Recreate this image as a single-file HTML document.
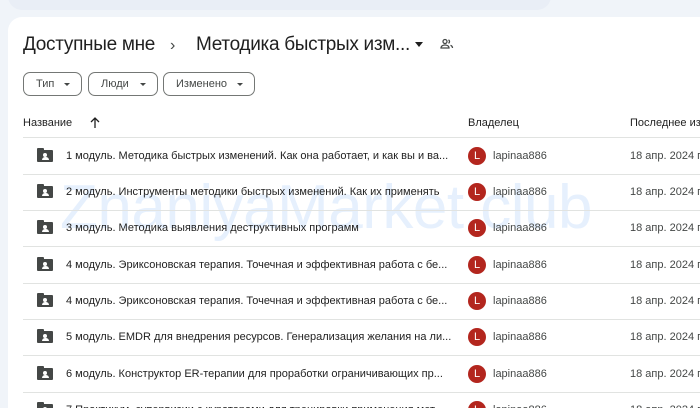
<!DOCTYPE html>
<html><head><meta charset="utf-8"><style>
*{margin:0;padding:0;box-sizing:border-box}
html,body{width:700px;height:408px;overflow:hidden}
body{background:#f0f4f9;font-family:"Liberation Sans",sans-serif;color:#1f1f1f;position:relative}
.search{position:absolute;left:8px;top:-20px;width:543px;height:30px;background:#e9eef6;border-radius:14px}
.card{position:absolute;left:8px;top:17px;width:692px;height:391px;background:#fff;border-radius:14px 0 0 0}
.bc{position:absolute;top:34px;font-size:19px;color:#1f1f1f;letter-spacing:-0.3px;white-space:nowrap}
.chip{position:absolute;top:72px;height:24px;border:1px solid #747775;border-radius:7px;font-size:11px;line-height:22px;padding-left:12px;color:#444746}
.chip:after{content:"";position:absolute;right:11px;top:10px;border-left:3px solid transparent;border-right:3px solid transparent;border-top:3px solid #444746}
.hdr{position:absolute;top:117px;font-size:11px;color:#1f1f1f;white-space:nowrap}
.line{position:absolute;left:23px;width:677px;height:1px;background:#e1e3e1}
.row{position:absolute;left:0;width:700px;height:20px;font-size:11px;overflow:hidden}
.row .ic{position:absolute;left:37px;top:4px;width:16px;height:12px;background:#444746;border-radius:1px}
.row .ic:before{content:"";position:absolute;left:0;top:-2px;width:7px;height:3px;background:#444746;border-radius:1px 1px 0 0}
.row .ic i{position:absolute;left:6px;top:3px;width:4px;height:4px;border-radius:50%;background:#fff}
.row .ic b{position:absolute;left:4.5px;top:7px;width:7px;height:3px;border-radius:3px 3px 0 0;background:#fff}
.row .t{position:absolute;left:66px;top:4px;white-space:nowrap}
.row .av{position:absolute;left:468px;top:1px;width:18px;height:18px;border-radius:50%;background:#b3261e;color:#fff;font-size:11px;text-align:center;line-height:18px}
.row .o{position:absolute;left:493px;top:4px;color:#444746}
.row .d{position:absolute;left:630px;top:4px;width:70px;overflow:hidden;color:#444746;white-space:nowrap}
.wm{position:absolute;left:60px;top:172px;font-size:62px;color:#e6f0fd;letter-spacing:-0.5px;white-space:nowrap}
</style></head><body>
<div class="search"></div>
<div class="card"></div>
<div class="bc" style="left:23px">Доступные мне</div>
<div class="bc" style="left:170px;font-size:16px;top:37px;color:#444746">›</div>
<div class="bc" style="left:196px">Методика быстрых изм...</div>
<div style="position:absolute;left:415px;top:42px;border-left:4px solid transparent;border-right:4px solid transparent;border-top:5px solid #1f1f1f"></div>
<svg style="position:absolute;left:440px;top:38px" width="14" height="12" viewBox="0 0 14 12" fill="none" stroke="#444746" stroke-width="1.3"><circle cx="5" cy="3.5" r="2"/><path d="M1 10c0-2 2-3 4-3s4 1 4 3z"/><path d="M8.5 1.8a2 2 0 010 3.5M10.5 7.3c1.3.5 2 1.4 2 2.7"/></svg>
<div class="chip" style="left:23px;width:59px">Тип</div>
<div class="chip" style="left:88px;width:70px">Люди</div>
<div class="chip" style="left:163px;width:92px">Изменено</div>
<div class="hdr" style="left:23px">Название</div>
<svg style="position:absolute;left:90px;top:117px" width="10" height="11" viewBox="0 0 10 11" fill="none" stroke="#1f1f1f" stroke-width="1.3"><path d="M5 11V1M1 5l4-4 4 4"/></svg>
<div class="hdr" style="left:468px">Владелец</div>
<div class="hdr" style="left:630px;width:70px;overflow:hidden">Последнее изменение</div>
<div class="line" style="top:137px"></div>
<div class="wm">ZnaniyaMarket.club</div>

<div class="row" style="top:146px"><div class="ic"><i></i><b></b></div><div class="t">1 модуль. Методика быстрых изменений. Как она работает, и как вы и ва...</div><div class="av">L</div><div class="o">lapinaa886</div><div class="d">18 апр. 2024 г.</div></div>
<div class="line" style="top:174px"></div>
<div class="row" style="top:182px"><div class="ic"><i></i><b></b></div><div class="t">2 модуль. Инструменты методики быстрых изменений. Как их применять</div><div class="av">L</div><div class="o">lapinaa886</div><div class="d">18 апр. 2024 г.</div></div>
<div class="line" style="top:210px"></div>
<div class="row" style="top:218px"><div class="ic"><i></i><b></b></div><div class="t">3 модуль. Методика выявления деструктивных программ</div><div class="av">L</div><div class="o">lapinaa886</div><div class="d">18 апр. 2024 г.</div></div>
<div class="line" style="top:246px"></div>
<div class="row" style="top:255px"><div class="ic"><i></i><b></b></div><div class="t">4 модуль. Эриксоновская терапия. Точечная и эффективная работа с бе...</div><div class="av">L</div><div class="o">lapinaa886</div><div class="d">18 апр. 2024 г.</div></div>
<div class="line" style="top:283px"></div>
<div class="row" style="top:291px"><div class="ic"><i></i><b></b></div><div class="t">4 модуль. Эриксоновская терапия. Точечная и эффективная работа с бе...</div><div class="av">L</div><div class="o">lapinaa886</div><div class="d">18 апр. 2024 г.</div></div>
<div class="line" style="top:319px"></div>
<div class="row" style="top:327px"><div class="ic"><i></i><b></b></div><div class="t">5 модуль. EMDR для внедрения ресурсов. Генерализация желания на ли...</div><div class="av">L</div><div class="o">lapinaa886</div><div class="d">18 апр. 2024 г.</div></div>
<div class="line" style="top:355px"></div>
<div class="row" style="top:364px"><div class="ic"><i></i><b></b></div><div class="t">6 модуль. Конструктор ER-терапии для проработки ограничивающих пр...</div><div class="av">L</div><div class="o">lapinaa886</div><div class="d">18 апр. 2024 г.</div></div>
<div class="line" style="top:392px"></div>
<div class="row" style="top:400px;height:8px"><div class="ic"><i></i><b></b></div><div class="t">7 Практикум, супервизии с кураторами для тренировки применения мет...</div><div class="av">L</div><div class="o">lapinaa886</div><div class="d">18 апр. 2024 г.</div></div>
</body></html>
